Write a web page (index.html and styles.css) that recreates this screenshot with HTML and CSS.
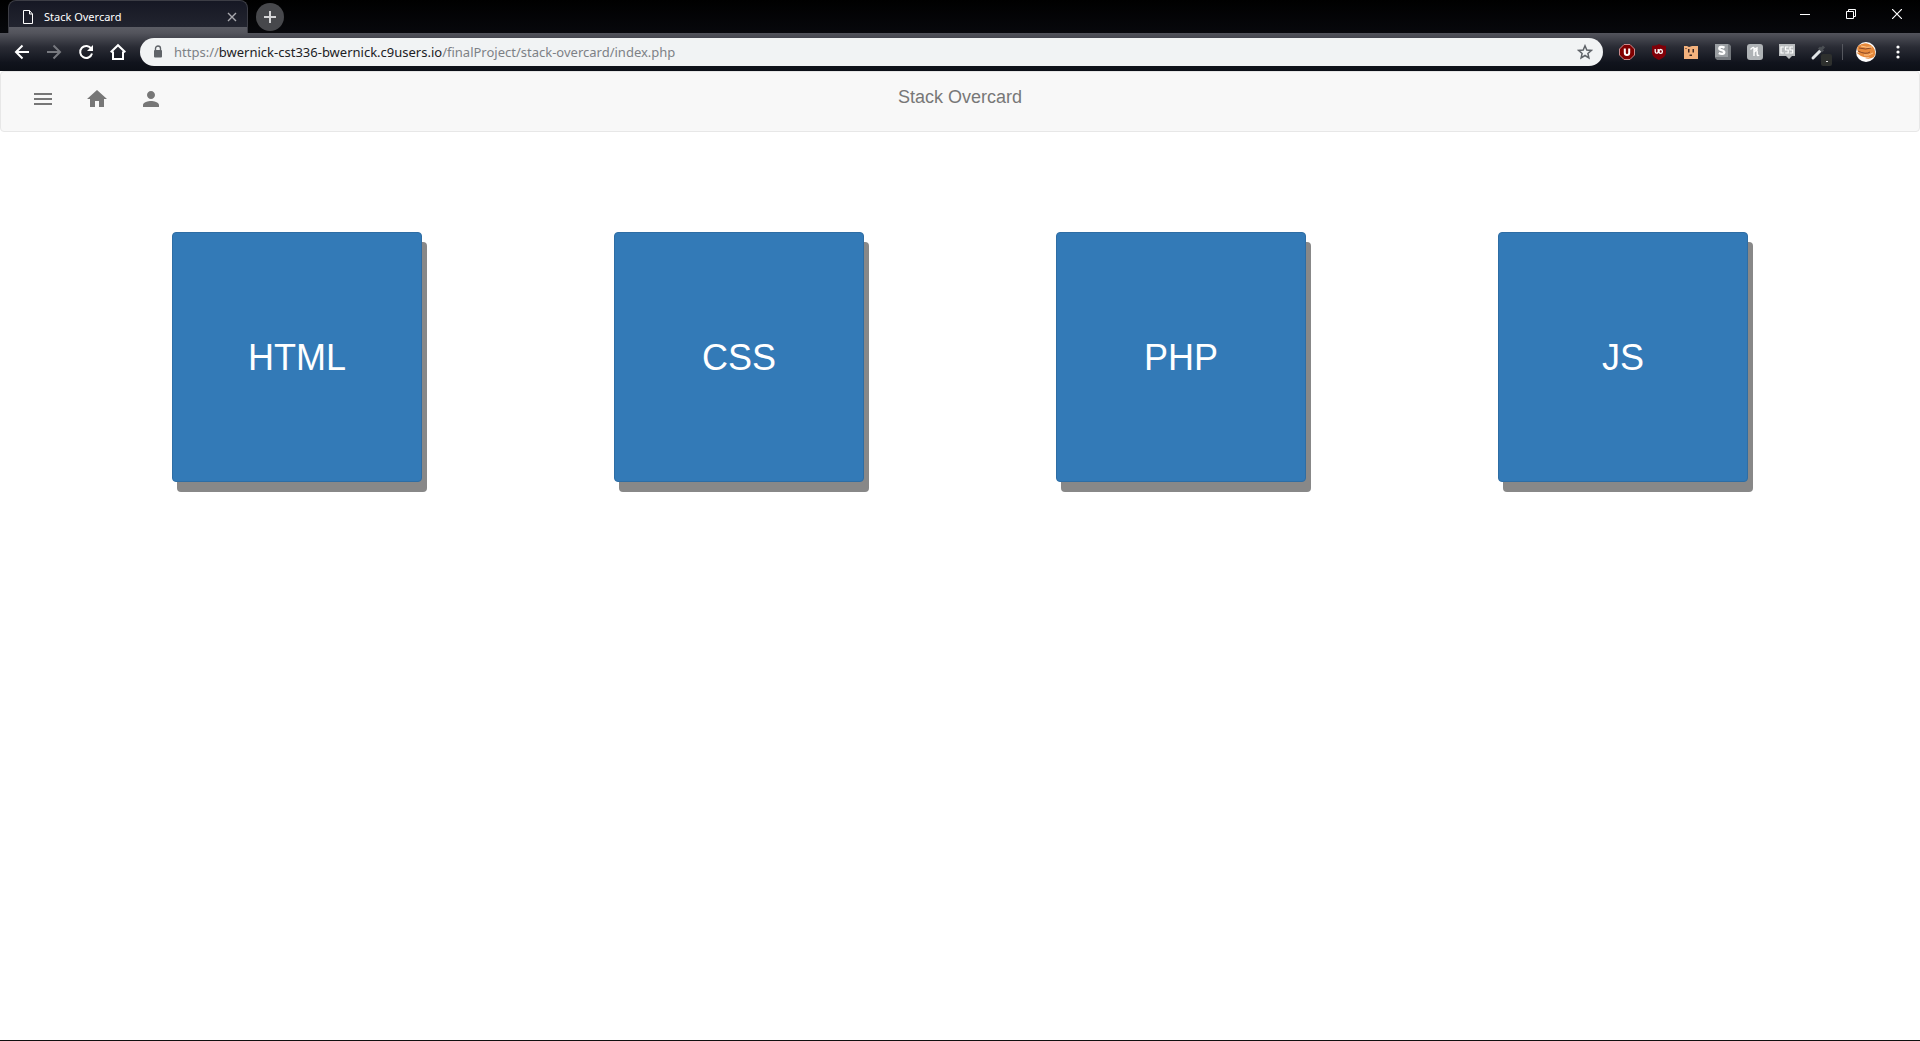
FILE: index.html
```html
<!DOCTYPE html>
<html lang="en">
<head>
<meta charset="utf-8">
<title>Stack Overcard</title>
<link rel="stylesheet" href="styles.css">
</head>
<body>
<header class="browser">
  <div class="tab-strip">
    <div class="tab">
      <svg class="tab-icon" width="12" height="14" viewBox="0 0 12 14" fill="none" stroke="#fff"><path d="M1.500.500h6l3 3.500v9.500h-9zM7.500.500V4h3"/></svg>
      <span class="tab-title">Stack Overcard</span>
      <button class="tab-close" aria-label="Close tab"><svg width="10" height="10" viewBox="0 0 10 10" stroke="#a9a9ae" stroke-width="1.400"><path d="M1 1l8 8M9 1l-8 8"/></svg></button>
    </div>
    <button class="new-tab" aria-label="New tab"><svg width="12" height="12" viewBox="0 0 12 12" stroke="#d5d5d7" stroke-width="2"><path d="M6 0v12M0 6h12"/></svg></button>
    <div class="window-buttons">
      <button class="window-button" aria-label="Minimize"><svg width="10" height="10" viewBox="0 0 10 10" stroke="#fff"><path d="M0 5.500h10"/></svg></button>
      <button class="window-button" aria-label="Restore"><svg width="10" height="10" viewBox="0 0 10 10" fill="none" stroke="#fff"><path d="M.5 2.500h7v7h-7zM2.500 2.500v-2h7v7h-2"/></svg></button>
      <button class="window-button" aria-label="Close"><svg width="10" height="10" viewBox="0 0 10 10" stroke="#fff" stroke-width="1.200"><path d="M0 0l10 10M10 0L0 10"/></svg></button>
    </div>
  </div>
  <div class="toolbar">
    <button class="tool" aria-label="Back"><svg width="16" height="16" viewBox="0 0 16 16" fill="none" stroke="#fff" stroke-width="2"><path d="M15 8H2M8.500 1.500L2 8l6.500 6.500"/></svg></button>
    <button class="tool" aria-label="Forward"><svg width="16" height="16" viewBox="0 0 16 16" fill="none" stroke="#77797f" stroke-width="2"><path d="M1 8h13M7.500 1.500L14 8l-6.500 6.500"/></svg></button>
    <button class="tool" aria-label="Reload"><svg width="16" height="16" viewBox="0 0 16 16"><path d="M13.300 4.800A6 6 0 1 0 14 9.500" fill="none" stroke="#fff" stroke-width="2"/><path d="M15 1v6H9z" fill="#fff"/></svg></button>
    <button class="tool" aria-label="Home"><svg width="18" height="18" viewBox="0 0 18 18" fill="none" stroke="#fff" stroke-width="2"><path d="M4 8.500v7.500h10V8.500M1.700 9.300L9 2.200l7.300 7.100"/></svg></button>
    <div class="address">
      <svg width="10" height="14" viewBox="0 0 10 14"><path d="M2.500 6V3.500a2.500 2.500 0 0 1 5 0V6" fill="none" stroke="#5f6368" stroke-width="1.400"/><rect x="1" y="5" width="8" height="7.500" rx="1" fill="#5f6368"/></svg>
      <span class="url">https://<span class="host">bwernick-cst336-bwernick.c9users.io</span>/finalProject/stack-overcard/index.php</span>
      <button class="star" aria-label="Bookmark this page"><svg width="16" height="16" viewBox="0 0 16 16" fill="none" stroke="#5f6368" stroke-width="1.500"><path d="M8 1.800l1.800 4.200 4.500.4-3.400 3 1 4.500L8 11.500l-3.900 2.400 1-4.500-3.400-3 4.500-.4z"/></svg></button>
    </div>
    <div class="extensions">
      <button class="tool" aria-label="uBlock"><svg width="16" height="16" viewBox="0 0 16 16"><path d="M5 .5h6L15.500 5v6L11 15.500H5L.5 11V5z" fill="#800000" stroke="#c9898b"/><path d="M5.800 4.500v4.300a2.200 2.200 0 0 0 4.400 0V4.500" fill="none" stroke="#fff" stroke-width="2"/></svg></button>
      <button class="tool" aria-label="uBlock Origin"><svg width="16" height="16" viewBox="0 0 16 16"><path d="M8 0c2.500 1.500 4.500 1.700 7 1.700V9c0 3-3 5-7 7-4-2-7-4-7-7V1.700C3.500 1.700 5.500 1.500 8 0z" fill="#800008"/><path d="M4.200 5v2.700a1.500 1.500 0 0 0 3 0V5M9.700 5.500a1.700 1.900 0 1 1 0 3.800 1.700 1.900 0 0 1 0-3.800" fill="none" stroke="#fff" stroke-width="1.300"/></svg></button>
      <button class="tool" aria-label="Face"><svg width="16" height="16" viewBox="0 0 16 16"><path d="M1 2h3l2 1 3-1h6v13H1z" fill="#f4b27d"/><path d="M5 5h1.500v3.500H5zM9.500 5H11v3.500H9.500zM6.500 10.500H9V12H6.500zM2.500 4h1v1h-1z" fill="#3b2722"/></svg></button>
      <button class="tool" aria-label="Stylish"><svg width="16" height="16" viewBox="0 0 16 16"><path d="M0 0h14l2 2v14H2l-2-2z" fill="#74787d"/><path d="M0 0h13v13H0z" fill="#9a9ea2"/><path d="M9.500 3.700C7.500 2.400 4.300 2.600 4.300 4.500c0 2.200 5 1.300 5 3.700 0 2-3.400 2-5.500.8" fill="none" stroke="#fff" stroke-width="2.300"/></svg></button>
      <button class="tool" aria-label="Honey"><svg width="16" height="16" viewBox="0 0 16 16"><rect width="16" height="16" rx="3" fill="#afb3b6"/><path d="M3.500 5.500C5 4 7 2.500 7 4.500v7.500M7 8.500C8.500 6 10.200 6 10.200 7.800v2.700c0 1.300 1 1.300 2 .5M7 5.500l3-1.500v2" fill="none" stroke="#fff" stroke-width="1.400"/></svg></button>
      <button class="tool" aria-label="CSS Viewer"><svg width="16" height="16" viewBox="0 0 16 16"><path d="M0 0h16v12h-3l-3 3-3-3H0z" fill="#b9bcbe"/><path d="M4.800 3H2v6h2.800M9.500 3h-3v3h2.700v3h-3M14 3h-3v3h2.700v3h-3" fill="none" stroke="#fff" stroke-width="1.200"/></svg></button>
      <button class="tool" aria-label="Color picker"><svg width="26" height="28" viewBox="0 0 26 28"><path d="M7 20l7.500-7.500" stroke="#e2e5e7" stroke-width="3" stroke-linecap="round"/><path d="M13 9.500l4 4M15 11.500l3-3" stroke="#4b4f54" stroke-width="3"/><rect x="15" y="16" width="11" height="12" rx="2" fill="#2e302e"/><path d="M20 23h2v1h-2z" fill="#ddd"/></svg></button>
    </div>
    <span class="divider"></span>
    <button class="tool" aria-label="Profile"><svg width="20" height="20" viewBox="0 0 20 20"><circle cx="10" cy="10" r="10" fill="#fff"/><path d="M2 4Q10-2 17 5q4 4 1 10-5 3-9 1 4 0 5-1-8 2-14-5l3 1Q0 8 2 4z" fill="#e78a3c"/><path d="M3 6q7 2 12 0M2 9q8 4 12 1" fill="none" stroke="#713721" stroke-width=".8"/><path d="M5 4q6 2 11 1M8 13q5 1 9-2" fill="none" stroke="#ffc68a"/></svg></button>
    <button class="tool" aria-label="Menu"><svg width="4" height="14" viewBox="0 0 4 14" fill="#fff"><circle cx="2" cy="2" r="1.600"/><circle cx="2" cy="7" r="1.600"/><circle cx="2" cy="12" r="1.600"/></svg></button>
  </div>
</header>
<nav class="navbar">
  <div class="nav-links">
    <a class="nav-link" href="#menu" aria-label="Menu"><svg width="24" height="24" viewBox="0 0 24 24"><path d="M3 18h18v-2H3v2zm0-5h18v-2H3v2zm0-7v2h18V6H3z"/></svg></a>
    <a class="nav-link" href="#home" aria-label="Home"><svg width="24" height="24" viewBox="0 0 24 24"><path d="M10 20v-6h4v6h5v-8h3L12 3 2 12h3v8z"/></svg></a>
    <a class="nav-link" href="#account" aria-label="Account"><svg width="24" height="24" viewBox="0 0 24 24"><path d="M12 12c2.210 0 4-1.790 4-4s-1.790-4-4-4-4 1.790-4 4 1.790 4 4 4zm0 2c-2.670 0-8 1.340-8 4v2h16v-2c0-2.660-5.330-4-8-4z"/></svg></a>
  </div>
  <a class="brand" href="#home">Stack Overcard</a>
</nav>
<main class="decks">
  <button class="deck">HTML</button>
  <button class="deck">CSS</button>
  <button class="deck">PHP</button>
  <button class="deck">JS</button>
</main>
</body>
</html>
```
FILE: styles.css
```css
* {
  box-sizing: border-box;
}

body {
  margin: 0;
  min-height: 100vh;
  border-bottom: 1px solid #101010;
  background: #fff;
  font-family: "Liberation Sans", Arial, sans-serif;
}

button {
  border: 0;
  padding: 0;
  background: none;
  font-family: inherit;
}

svg {
  display: block;
  flex: none;
}

.browser {
  font-family: "Noto Sans", "Open Sans", sans-serif;
}

.tab-strip {
  display: flex;
  height: 33px;
  padding-left: 8px;
  background: linear-gradient(#000, #07080c);
}

.tab {
  display: flex;
  align-items: center;
  width: 240px;
  padding: 0 9px 1px 13px;
  border: 1px solid #3c3d45;
  border-bottom: 0;
  border-radius: 8px 8px 0 0;
  background: linear-gradient(#161824, #22242f 26px, #5b5c64 26px, #53545c);
}

.tab-title {
  flex: 1;
  margin-left: 10px;
  color: #fff;
  font-size: 11px;
}

.tab-close {
  display: grid;
  place-items: center;
  width: 12px;
  height: 16px;
}

.new-tab {
  display: grid;
  place-items: center;
  width: 28px;
  height: 28px;
  margin: 3px 0 0 8px;
  border-radius: 50%;
  background: #47484c;
}

.window-buttons {
  display: flex;
  height: 28px;
  margin-left: auto;
}

.window-button {
  display: grid;
  place-items: center;
  width: 46px;
}

.toolbar {
  display: flex;
  align-items: center;
  height: 38px;
  padding: 0 6px;
  background: linear-gradient(#53545c, #2a2c35 14px, #10131c 30px, #0c0f17);
}

.tool {
  display: grid;
  place-items: center;
  flex: none;
  width: 32px;
  height: 28px;
}

.address {
  display: flex;
  align-items: center;
  flex: 1;
  min-width: 0;
  height: 28px;
  margin: 0 8px 0 6px;
  padding: 0 10px 0 13px;
  border-radius: 14px;
  background: #f1f3f4;
}

.url {
  flex: 1;
  overflow: hidden;
  margin-left: 11px;
  color: #7d8186;
  font-size: 13px;
  white-space: nowrap;
}

.host {
  color: #202124;
}

.extensions {
  display: flex;
}

.divider {
  width: 1px;
  height: 16px;
  margin: 0 7px;
  background: #55575e;
}

.navbar {
  display: grid;
  grid-template-columns: 1fr auto 1fr;
  min-height: 61px;
  padding: 0 15px;
  border: 1px solid #e7e7e7;
  border-radius: 4px;
  background: #f8f8f8;
}

.nav-links {
  display: flex;
}

.nav-link {
  padding: 15px;
  fill: #777;
}

.brand {
  padding: 15px;
  color: #777;
  font-size: 18px;
  line-height: 20px;
  text-decoration: none;
}

.decks {
  display: grid;
  grid-template-columns: repeat(auto-fit, minmax(300px, 1fr));
  justify-items: center;
  row-gap: 100px;
  max-width: 2000px;
  margin: 0 auto;
  padding: 100px 76px;
}

.deck {
  width: 250px;
  height: 250px;
  padding-top: 1px;
  border: 1px solid #2e6da4;
  border-radius: 4px;
  background: #337ab7;
  box-shadow: 5px 10px #888;
  color: #fff;
  font-size: 36px;
}
```
